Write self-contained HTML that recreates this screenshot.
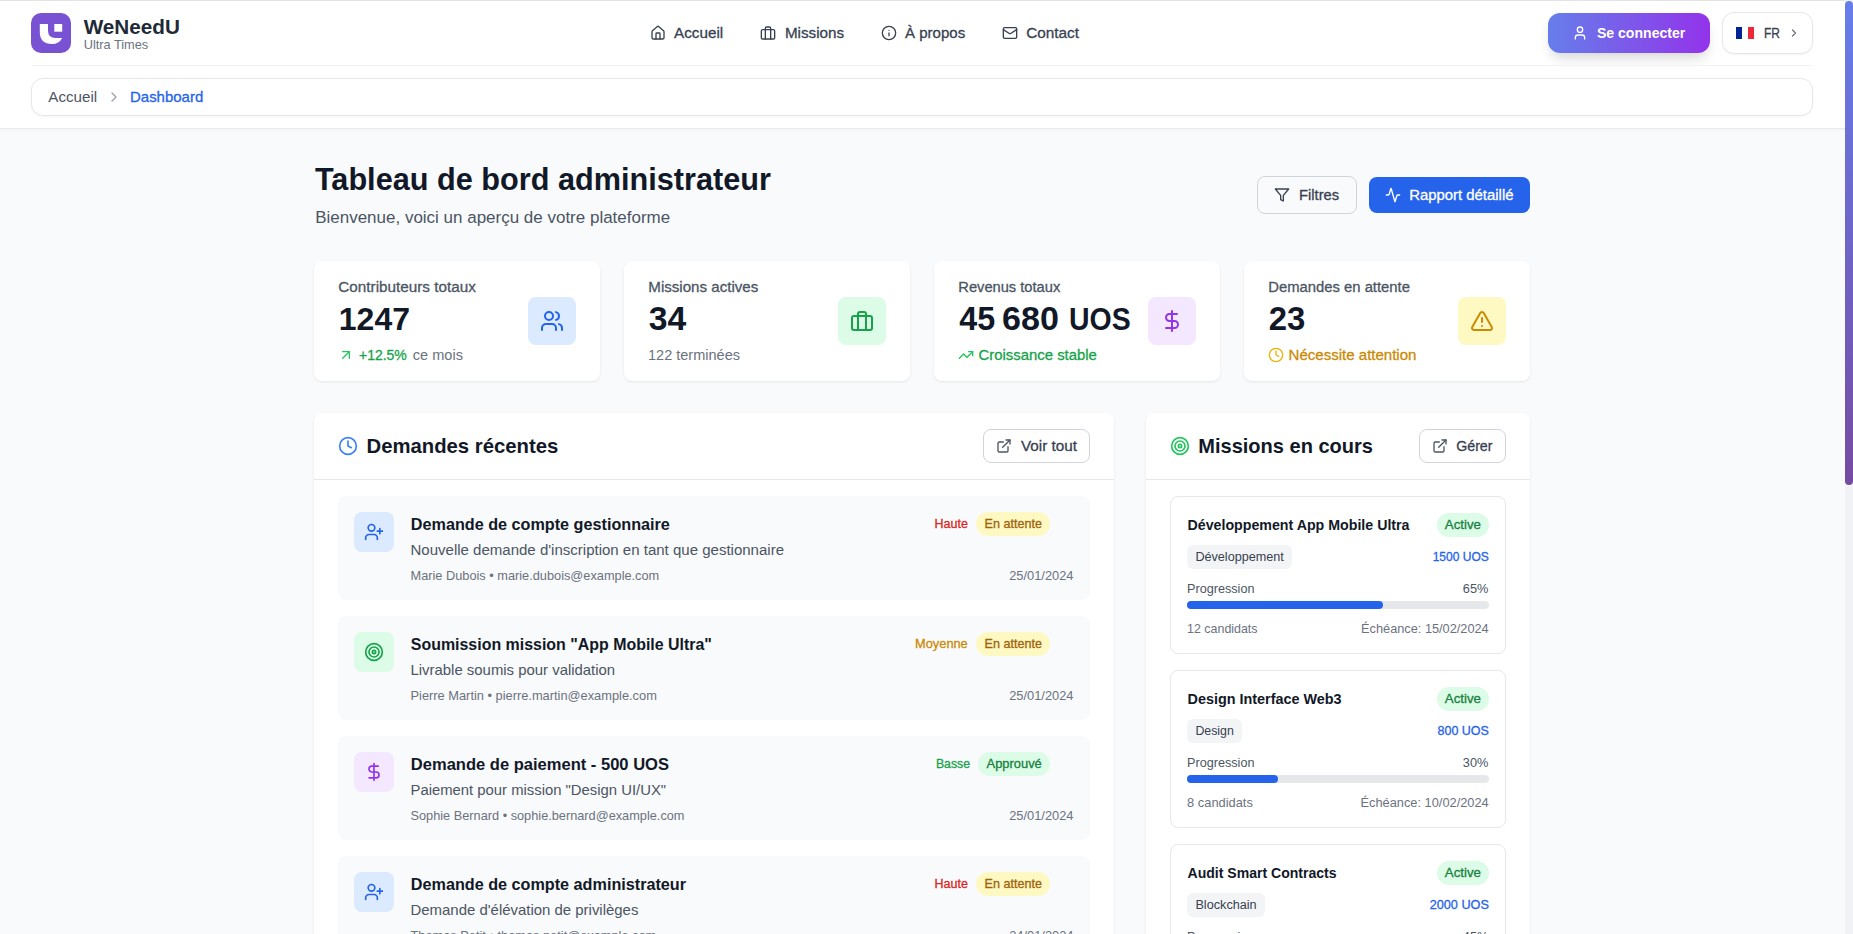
<!DOCTYPE html>
<html lang="fr"><head><meta charset="utf-8"><title>Dashboard</title>
<style>
html,body{margin:0;padding:0;}
body{width:1853px;height:934px;overflow:hidden;position:relative;background:#f9fafb;font-family:"Liberation Sans",sans-serif;}
.t{position:absolute;white-space:nowrap;}
.r{position:absolute;}
.i{position:absolute;overflow:visible;}
</style></head><body>
<div class="r" style="left:0px;top:0px;width:1845px;height:128px;background:#fff;"></div>
<div class="r" style="left:0px;top:0px;width:1845px;height:1px;background:#e3e3e8;"></div>
<div class="r" style="left:0px;top:128px;width:1845px;height:1px;background:#e9ebef;"></div>
<div class="r" style="left:0px;top:129px;width:1845px;height:2px;background:linear-gradient(#eff1f4,#f9fafb);"></div>
<svg class="i" style="left:31px;top:13px" width="40" height="40" viewBox="0 0 40 40"><rect width="40" height="40" rx="10" fill="#7952d3"/><path fill="#fff" d="M8.8 11H17V17.5Q17 25 24.5 25H31.2Q28 31 21 31Q8.8 31 8.8 19Z"/><rect x="23.3" y="11" width="7.9" height="7.7" fill="#fff"/></svg>
<div class="t" style="left:83.70px;top:15.00px;font-size:20.69px;line-height:23px;font-weight:700;color:#1f2937;">WeNeedU</div>
<div class="t" style="left:83.70px;top:37.00px;font-size:12.78px;line-height:15px;color:#6b7280;">Ultra Times</div>
<svg class="i" style="left:650px;top:25px" width="16" height="16" viewBox="0 0 24 24" fill="none" stroke="#374151" stroke-width="2" stroke-linecap="round" stroke-linejoin="round"><path d="M15 21v-8a1 1 0 0 0-1-1h-4a1 1 0 0 0-1 1v8"/><path d="M3 10a2 2 0 0 1 .709-1.528l7-5.999a2 2 0 0 1 2.582 0l7 5.999A2 2 0 0 1 21 10v9a2 2 0 0 1-2 2H5a2 2 0 0 1-2-2z"/></svg>
<div class="t" style="left:674.10px;top:24.00px;font-size:15.22px;line-height:17px;color:#374151;-webkit-text-stroke:0.3px #374151;">Accueil</div>
<svg class="i" style="left:760px;top:25px" width="16" height="16" viewBox="0 0 24 24" fill="none" stroke="#374151" stroke-width="2" stroke-linecap="round" stroke-linejoin="round"><rect width="20" height="14" x="2" y="7" rx="2" ry="2"/><path d="M16 21V5a2 2 0 0 0-2-2h-4a2 2 0 0 0-2 2v16"/></svg>
<div class="t" style="left:784.90px;top:24.00px;font-size:15.22px;line-height:17px;color:#374151;-webkit-text-stroke:0.3px #374151;">Missions</div>
<svg class="i" style="left:881px;top:25px" width="16" height="16" viewBox="0 0 24 24" fill="none" stroke="#374151" stroke-width="2" stroke-linecap="round" stroke-linejoin="round"><circle cx="12" cy="12" r="10"/><path d="M12 16v-4"/><path d="M12 8h.01"/></svg>
<div class="t" style="left:905.00px;top:24.00px;font-size:15.06px;line-height:17px;color:#374151;-webkit-text-stroke:0.3px #374151;">À propos</div>
<svg class="i" style="left:1002px;top:25px" width="16" height="16" viewBox="0 0 24 24" fill="none" stroke="#374151" stroke-width="2" stroke-linecap="round" stroke-linejoin="round"><rect width="20" height="16" x="2" y="4" rx="2"/><path d="m22 7-8.97 5.7a1.94 1.94 0 0 1-2.06 0L2 7"/></svg>
<div class="t" style="left:1026.20px;top:24.00px;font-size:15.33px;line-height:17px;color:#374151;-webkit-text-stroke:0.3px #374151;">Contact</div>
<div class="r" style="left:1548px;top:13px;width:162px;height:40px;border-radius:12px;background:linear-gradient(90deg,#667eea,#9333ea);box-shadow:0 8px 14px -4px rgba(0,0,0,.18);"></div>
<svg class="i" style="left:1572px;top:25px" width="16" height="16" viewBox="0 0 24 24" fill="none" stroke="#fff" stroke-width="2" stroke-linecap="round" stroke-linejoin="round"><path d="M19 21v-2a4 4 0 0 0-4-4H9a4 4 0 0 0-4 4v2"/><circle cx="12" cy="7" r="4"/></svg>
<div class="t" style="left:1596.90px;top:25.00px;font-size:14.08px;line-height:16px;font-weight:700;color:#fff;">Se connecter</div>
<div class="r" style="left:1722px;top:12px;width:91px;height:42px;box-sizing:border-box;border:1px solid #e5e7eb;border-radius:12px;background:#fff;box-shadow:0 1px 2px rgba(0,0,0,.05);"></div>
<div class="r" style="left:1736px;top:27px;width:6px;height:12px;background:#002395;"></div>
<div class="r" style="left:1748px;top:27px;width:6px;height:12px;background:#ed2939;"></div>
<div class="t" style="left:1763.70px;top:24.00px;font-size:15.2px;line-height:17px;color:#374151;transform:scaleX(0.79);transform-origin:0 0;-webkit-text-stroke:0.3px #374151;">FR</div>
<svg class="i" style="left:1788px;top:27px" width="12" height="12" viewBox="0 0 24 24" fill="none" stroke="#6b7280" stroke-width="2.5" stroke-linecap="round" stroke-linejoin="round"><path d="m9 18 6-6-6-6"/></svg>
<div class="r" style="left:31px;top:65px;width:1782px;height:1px;background:#f1f2f4;"></div>
<div class="r" style="left:31px;top:78px;width:1782px;height:38px;box-sizing:border-box;border:1px solid #e5e7eb;border-radius:12px;background:#fff;box-shadow:0 1px 2px rgba(0,0,0,.04);"></div>
<div class="t" style="left:48.30px;top:88.00px;font-size:15.16px;line-height:17px;color:#4b5563;">Accueil</div>
<svg class="i" style="left:106px;top:89px" width="16" height="16" viewBox="0 0 24 24" fill="none" stroke="#9ca3af" stroke-width="2" stroke-linecap="round" stroke-linejoin="round"><path d="m9 18 6-6-6-6"/></svg>
<div class="t" style="left:130.00px;top:88.00px;font-size:14.97px;line-height:17px;color:#2563eb;-webkit-text-stroke:0.3px #2563eb;">Dashboard</div>
<div class="t" style="left:314.90px;top:162.00px;font-size:30.66px;line-height:34px;font-weight:700;color:#111827;">Tableau de bord administrateur</div>
<div class="t" style="left:315.20px;top:208.00px;font-size:16.99px;line-height:19px;color:#4b5563;">Bienvenue, voici un aperçu de votre plateforme</div>
<div class="r" style="left:1257px;top:176px;width:100px;height:38px;box-sizing:border-box;border:1px solid #d1d5db;border-radius:8px;background:#f9fafb;"></div>
<svg class="i" style="left:1274px;top:187px" width="16" height="16" viewBox="0 0 24 24" fill="none" stroke="#374151" stroke-width="2" stroke-linecap="round" stroke-linejoin="round"><polygon points="22 3 2 3 10 12.46 10 19 14 21 14 12.46 22 3"/></svg>
<div class="t" style="left:1299.10px;top:187.00px;font-size:14.71px;line-height:16px;color:#374151;-webkit-text-stroke:0.3px #374151;">Filtres</div>
<div class="r" style="left:1369px;top:177px;width:161px;height:36px;border-radius:8px;background:#2563eb;"></div>
<svg class="i" style="left:1385px;top:187px" width="16" height="16" viewBox="0 0 24 24" fill="none" stroke="#fff" stroke-width="2" stroke-linecap="round" stroke-linejoin="round"><path d="M22 12h-2.48a2 2 0 0 0-1.93 1.46l-2.35 8.36a.25.25 0 0 1-.48 0L9.24 2.18a.25.25 0 0 0-.48 0l-2.35 8.36A2 2 0 0 1 4.49 12H2"/></svg>
<div class="t" style="left:1409.20px;top:187.00px;font-size:14.9px;line-height:16px;color:#fff;-webkit-text-stroke:0.3px #fff;">Rapport détaillé</div>
<div class="r" style="left:314px;top:261px;width:286px;height:120px;border-radius:8px;background:#fff;box-shadow:0 1px 3px rgba(0,0,0,.06),0 1px 2px rgba(0,0,0,.03);"></div>
<div class="t" style="left:338.30px;top:278.00px;font-size:15.28px;line-height:17px;color:#4b5563;-webkit-text-stroke:0.3px #4b5563;">Contributeurs totaux</div>
<div class="t" style="left:338.80px;top:301.00px;font-size:32.0px;line-height:36px;font-weight:700;color:#111827;">1247</div>
<div class="r" style="left:528px;top:297px;width:48px;height:48px;border-radius:8px;background:#dbeafe;"></div>
<svg class="i" style="left:540px;top:309px" width="24" height="24" viewBox="0 0 24 24" fill="none" stroke="#2563eb" stroke-width="2" stroke-linecap="round" stroke-linejoin="round"><path d="M16 21v-2a4 4 0 0 0-4-4H6a4 4 0 0 0-4 4v2"/><circle cx="9" cy="7" r="4"/><path d="M22 21v-2a4 4 0 0 0-3-3.87"/><path d="M16 3.13a4 4 0 0 1 0 7.75"/></svg>
<div class="r" style="left:624px;top:261px;width:286px;height:120px;border-radius:8px;background:#fff;box-shadow:0 1px 3px rgba(0,0,0,.06),0 1px 2px rgba(0,0,0,.03);"></div>
<div class="t" style="left:648.30px;top:278.00px;font-size:15.11px;line-height:17px;color:#4b5563;-webkit-text-stroke:0.3px #4b5563;">Missions actives</div>
<div class="t" style="left:648.80px;top:300.00px;font-size:33.69px;line-height:37px;font-weight:700;color:#111827;">34</div>
<div class="r" style="left:838px;top:297px;width:48px;height:48px;border-radius:8px;background:#dcfce7;"></div>
<svg class="i" style="left:850px;top:309px" width="24" height="24" viewBox="0 0 24 24" fill="none" stroke="#16a34a" stroke-width="2" stroke-linecap="round" stroke-linejoin="round"><rect width="20" height="14" x="2" y="7" rx="2" ry="2"/><path d="M16 21V5a2 2 0 0 0-2-2h-4a2 2 0 0 0-2 2v16"/></svg>
<div class="r" style="left:934px;top:261px;width:286px;height:120px;border-radius:8px;background:#fff;box-shadow:0 1px 3px rgba(0,0,0,.06),0 1px 2px rgba(0,0,0,.03);"></div>
<div class="t" style="left:958.30px;top:279.00px;font-size:14.68px;line-height:16px;color:#4b5563;-webkit-text-stroke:0.3px #4b5563;">Revenus totaux</div>
<div class="t" style="left:959.20px;top:301.00px;font-size:32.3px;line-height:36px;font-weight:700;color:#111827;">45</div>
<div class="t" style="left:1001.80px;top:301.00px;font-size:32.3px;line-height:36px;font-weight:700;color:#111827;transform:scaleX(1.0549);transform-origin:0.0px 0;">680</div>
<div class="t" style="left:1068.90px;top:302.00px;font-size:31px;line-height:35px;font-weight:700;color:#111827;transform:scaleX(0.9178);transform-origin:0.0px 0;">UOS</div>
<div class="r" style="left:1148px;top:297px;width:48px;height:48px;border-radius:8px;background:#f3e8ff;"></div>
<svg class="i" style="left:1160px;top:309px" width="24" height="24" viewBox="0 0 24 24" fill="none" stroke="#9333ea" stroke-width="2" stroke-linecap="round" stroke-linejoin="round"><line x1="12" x2="12" y1="2" y2="22"/><path d="M17 5H9.5a3.5 3.5 0 0 0 0 7h5a3.5 3.5 0 0 1 0 7H6"/></svg>
<div class="r" style="left:1244px;top:261px;width:286px;height:120px;border-radius:8px;background:#fff;box-shadow:0 1px 3px rgba(0,0,0,.06),0 1px 2px rgba(0,0,0,.03);"></div>
<div class="t" style="left:1268.30px;top:279.00px;font-size:14.82px;line-height:16px;color:#4b5563;-webkit-text-stroke:0.3px #4b5563;">Demandes en attente</div>
<div class="t" style="left:1268.80px;top:300.00px;font-size:32.88px;line-height:37px;font-weight:700;color:#111827;">23</div>
<div class="r" style="left:1458px;top:297px;width:48px;height:48px;border-radius:8px;background:#fef9c3;"></div>
<svg class="i" style="left:1470px;top:309px" width="24" height="24" viewBox="0 0 24 24" fill="none" stroke="#ca8a04" stroke-width="2" stroke-linecap="round" stroke-linejoin="round"><path d="m21.73 18-8-14a2 2 0 0 0-3.48 0l-8 14A2 2 0 0 0 4 21h16a2 2 0 0 0 1.73-3"/><path d="M12 9v4"/><path d="M12 17h.01"/></svg>
<svg class="i" style="left:338px;top:347px" width="16" height="16" viewBox="0 0 24 24" fill="none" stroke="#22c55e" stroke-width="2" stroke-linecap="round" stroke-linejoin="round"><path d="M7 7h10v10"/><path d="M7 17 17 7"/></svg>
<div class="t" style="left:359.00px;top:347.00px;font-size:13.98px;line-height:16px;color:#16a34a;-webkit-text-stroke:0.3px #16a34a;">+12.5%</div>
<div class="t" style="left:412.80px;top:347.00px;font-size:14.57px;line-height:16px;color:#6b7280;">ce mois</div>
<div class="t" style="left:648.00px;top:347.00px;font-size:14.52px;line-height:16px;color:#6b7280;">122 terminées</div>
<svg class="i" style="left:958px;top:347px" width="16" height="16" viewBox="0 0 24 24" fill="none" stroke="#22c55e" stroke-width="2" stroke-linecap="round" stroke-linejoin="round"><polyline points="22 7 13.5 15.5 8.5 10.5 2 17"/><polyline points="16 7 22 7 22 13"/></svg>
<div class="t" style="left:978.60px;top:347.00px;font-size:14.89px;line-height:16px;color:#16a34a;-webkit-text-stroke:0.3px #16a34a;">Croissance stable</div>
<svg class="i" style="left:1268px;top:347px" width="16" height="16" viewBox="0 0 24 24" fill="none" stroke="#eab308" stroke-width="2" stroke-linecap="round" stroke-linejoin="round"><circle cx="12" cy="12" r="10"/><polyline points="12 6 12 12 16 14"/></svg>
<div class="t" style="left:1288.60px;top:346.00px;font-size:15.04px;line-height:17px;color:#ca8a04;-webkit-text-stroke:0.3px #ca8a04;">Nécessite attention</div>
<div class="r" style="left:314px;top:413px;width:800px;height:600px;border-radius:8px;background:#fff;box-shadow:0 1px 3px rgba(0,0,0,.06),0 1px 2px rgba(0,0,0,.03);"></div>
<div class="r" style="left:314px;top:479px;width:800px;height:1px;background:#e5e7eb;"></div>
<svg class="i" style="left:338px;top:436px" width="20" height="20" viewBox="0 0 24 24" fill="none" stroke="#3b82f6" stroke-width="2" stroke-linecap="round" stroke-linejoin="round"><circle cx="12" cy="12" r="10"/><polyline points="12 6 12 12 16 14"/></svg>
<div class="t" style="left:366.50px;top:435.00px;font-size:20.31px;line-height:22px;font-weight:700;color:#111827;">Demandes récentes</div>
<div class="r" style="left:983px;top:429px;width:107px;height:34px;box-sizing:border-box;border:1px solid #d1d5db;border-radius:8px;background:#fff;"></div>
<svg class="i" style="left:996px;top:438px" width="16" height="16" viewBox="0 0 24 24" fill="none" stroke="#4b5563" stroke-width="2" stroke-linecap="round" stroke-linejoin="round"><path d="M15 3h6v6"/><path d="M10 14 21 3"/><path d="M18 13v6a2 2 0 0 1-2 2H5a2 2 0 0 1-2-2V8a2 2 0 0 1 2-2h6"/></svg>
<div class="t" style="left:1020.90px;top:437.00px;font-size:15.29px;line-height:17px;color:#374151;-webkit-text-stroke:0.3px #374151;">Voir tout</div>
<div class="r" style="left:338px;top:496px;width:752px;height:104px;border-radius:8px;background:#f9fafb;"></div>
<div class="r" style="left:354px;top:512px;width:40px;height:40px;border-radius:8px;background:#dbeafe;"></div>
<svg class="i" style="left:364px;top:522px" width="20" height="20" viewBox="0 0 24 24" fill="none" stroke="#2563eb" stroke-width="2" stroke-linecap="round" stroke-linejoin="round"><path d="M16 21v-2a4 4 0 0 0-4-4H6a4 4 0 0 0-4 4v2"/><circle cx="9" cy="7" r="4"/><line x1="19" x2="19" y1="8" y2="14"/><line x1="22" x2="16" y1="11" y2="11"/></svg>
<div class="t" style="left:410.80px;top:515.00px;font-size:16.2px;line-height:18px;font-weight:700;color:#111827;">Demande de compte gestionnaire</div>
<div class="t" style="left:410.50px;top:541.00px;font-size:15.02px;line-height:17px;color:#4b5563;">Nouvelle demande d&#x27;inscription en tant que gestionnaire</div>
<div class="t" style="left:410.50px;top:568.00px;font-size:12.78px;line-height:15px;color:#6b7280;">Marie Dubois • marie.dubois@example.com</div>
<div class="t" style="left:1009.20px;top:568.00px;font-size:12.85px;line-height:15px;color:#6b7280;">25/01/2024</div>
<div class="t" style="left:934.60px;top:517.00px;font-size:12.51px;line-height:14px;color:#dc2626;-webkit-text-stroke:0.3px #dc2626;">Haute</div>
<div class="r" style="left:976px;top:512px;width:74px;height:24px;border-radius:12px;background:#fef9c3;"></div>
<div class="t" style="left:984.60px;top:517.00px;font-size:12.57px;line-height:14px;color:#a16207;-webkit-text-stroke:0.3px #a16207;">En attente</div>
<div class="r" style="left:338px;top:616px;width:752px;height:104px;border-radius:8px;background:#f9fafb;"></div>
<div class="r" style="left:354px;top:632px;width:40px;height:40px;border-radius:8px;background:#dcfce7;"></div>
<svg class="i" style="left:364px;top:642px" width="20" height="20" viewBox="0 0 24 24" fill="none" stroke="#16a34a" stroke-width="2" stroke-linecap="round" stroke-linejoin="round"><circle cx="12" cy="12" r="10"/><circle cx="12" cy="12" r="6"/><circle cx="12" cy="12" r="2"/></svg>
<div class="t" style="left:410.80px;top:636.00px;font-size:15.95px;line-height:17px;font-weight:700;color:#111827;">Soumission mission &quot;App Mobile Ultra&quot;</div>
<div class="t" style="left:410.50px;top:661.00px;font-size:14.92px;line-height:17px;color:#4b5563;">Livrable soumis pour validation</div>
<div class="t" style="left:410.50px;top:688.00px;font-size:12.83px;line-height:15px;color:#6b7280;">Pierre Martin • pierre.martin@example.com</div>
<div class="t" style="left:1009.20px;top:688.00px;font-size:12.85px;line-height:15px;color:#6b7280;">25/01/2024</div>
<div class="t" style="left:915.10px;top:636.00px;font-size:12.81px;line-height:15px;color:#ca8a04;-webkit-text-stroke:0.3px #ca8a04;">Moyenne</div>
<div class="r" style="left:976px;top:632px;width:74px;height:24px;border-radius:12px;background:#fef9c3;"></div>
<div class="t" style="left:984.60px;top:637.00px;font-size:12.57px;line-height:14px;color:#a16207;-webkit-text-stroke:0.3px #a16207;">En attente</div>
<div class="r" style="left:338px;top:736px;width:752px;height:104px;border-radius:8px;background:#f9fafb;"></div>
<div class="r" style="left:354px;top:752px;width:40px;height:40px;border-radius:8px;background:#f3e8ff;"></div>
<svg class="i" style="left:364px;top:762px" width="20" height="20" viewBox="0 0 24 24" fill="none" stroke="#9333ea" stroke-width="2" stroke-linecap="round" stroke-linejoin="round"><line x1="12" x2="12" y1="2" y2="22"/><path d="M17 5H9.5a3.5 3.5 0 0 0 0 7h5a3.5 3.5 0 0 1 0 7H6"/></svg>
<div class="t" style="left:410.80px;top:755.00px;font-size:16.55px;line-height:19px;font-weight:700;color:#111827;">Demande de paiement - 500 UOS</div>
<div class="t" style="left:410.50px;top:782.00px;font-size:14.85px;line-height:16px;color:#4b5563;">Paiement pour mission &quot;Design UI/UX&quot;</div>
<div class="t" style="left:410.50px;top:808.00px;font-size:12.76px;line-height:15px;color:#6b7280;">Sophie Bernard • sophie.bernard@example.com</div>
<div class="t" style="left:1009.20px;top:808.00px;font-size:12.85px;line-height:15px;color:#6b7280;">25/01/2024</div>
<div class="t" style="left:935.90px;top:757.00px;font-size:12.27px;line-height:14px;color:#16a34a;-webkit-text-stroke:0.3px #16a34a;">Basse</div>
<div class="r" style="left:978px;top:752px;width:72px;height:24px;border-radius:12px;background:#dcfce7;"></div>
<div class="t" style="left:986.60px;top:756.00px;font-size:12.9px;line-height:15px;color:#15803d;-webkit-text-stroke:0.3px #15803d;">Approuvé</div>
<div class="r" style="left:338px;top:856px;width:752px;height:104px;border-radius:8px;background:#f9fafb;"></div>
<div class="r" style="left:354px;top:872px;width:40px;height:40px;border-radius:8px;background:#dbeafe;"></div>
<svg class="i" style="left:364px;top:882px" width="20" height="20" viewBox="0 0 24 24" fill="none" stroke="#2563eb" stroke-width="2" stroke-linecap="round" stroke-linejoin="round"><path d="M16 21v-2a4 4 0 0 0-4-4H6a4 4 0 0 0-4 4v2"/><circle cx="9" cy="7" r="4"/><line x1="19" x2="19" y1="8" y2="14"/><line x1="22" x2="16" y1="11" y2="11"/></svg>
<div class="t" style="left:410.80px;top:875.00px;font-size:16.22px;line-height:18px;font-weight:700;color:#111827;">Demande de compte administrateur</div>
<div class="t" style="left:410.50px;top:901.00px;font-size:14.95px;line-height:17px;color:#4b5563;">Demande d&#x27;élévation de privilèges</div>
<div class="t" style="left:410.50px;top:928.00px;font-size:12.8px;line-height:15px;color:#6b7280;">Thomas Petit • thomas.petit@example.com</div>
<div class="t" style="left:1009.20px;top:928.00px;font-size:12.85px;line-height:15px;color:#6b7280;">24/01/2024</div>
<div class="t" style="left:934.60px;top:877.00px;font-size:12.51px;line-height:14px;color:#dc2626;-webkit-text-stroke:0.3px #dc2626;">Haute</div>
<div class="r" style="left:976px;top:872px;width:74px;height:24px;border-radius:12px;background:#fef9c3;"></div>
<div class="t" style="left:984.60px;top:877.00px;font-size:12.57px;line-height:14px;color:#a16207;-webkit-text-stroke:0.3px #a16207;">En attente</div>
<div class="r" style="left:1146px;top:413px;width:384px;height:600px;border-radius:8px;background:#fff;box-shadow:0 1px 3px rgba(0,0,0,.06),0 1px 2px rgba(0,0,0,.03);"></div>
<div class="r" style="left:1146px;top:479px;width:384px;height:1px;background:#e5e7eb;"></div>
<svg class="i" style="left:1170px;top:436px" width="20" height="20" viewBox="0 0 24 24" fill="none" stroke="#22c55e" stroke-width="2" stroke-linecap="round" stroke-linejoin="round"><circle cx="12" cy="12" r="10"/><circle cx="12" cy="12" r="6"/><circle cx="12" cy="12" r="2"/></svg>
<div class="t" style="left:1198.30px;top:435.00px;font-size:20.03px;line-height:22px;font-weight:700;color:#111827;">Missions en cours</div>
<div class="r" style="left:1419px;top:429px;width:87px;height:34px;box-sizing:border-box;border:1px solid #d1d5db;border-radius:8px;background:#fff;"></div>
<svg class="i" style="left:1432px;top:438px" width="16" height="16" viewBox="0 0 24 24" fill="none" stroke="#4b5563" stroke-width="2" stroke-linecap="round" stroke-linejoin="round"><path d="M15 3h6v6"/><path d="M10 14 21 3"/><path d="M18 13v6a2 2 0 0 1-2 2H5a2 2 0 0 1-2-2V8a2 2 0 0 1 2-2h6"/></svg>
<div class="t" style="left:1456.20px;top:438.00px;font-size:14.21px;line-height:16px;color:#374151;-webkit-text-stroke:0.3px #374151;">Gérer</div>
<div class="r" style="left:1170px;top:496px;width:336px;height:158px;box-sizing:border-box;border:1px solid #e5e7eb;border-radius:8px;background:#fff;"></div>
<div class="t" style="left:1187.50px;top:517.00px;font-size:14.21px;line-height:16px;font-weight:700;color:#111827;">Développement App Mobile Ultra</div>
<div class="r" style="left:1437px;top:513px;width:52px;height:24px;border-radius:12px;background:#dcfce7;"></div>
<div class="t" style="left:1444.80px;top:517.00px;font-size:13.28px;line-height:15px;color:#15803d;-webkit-text-stroke:0.3px #15803d;">Active</div>
<div class="r" style="left:1187px;top:545px;width:105px;height:24px;border-radius:6px;background:#f3f4f6;"></div>
<div class="t" style="left:1195.40px;top:550.00px;font-size:12.63px;line-height:14px;color:#374151;">Développement</div>
<div class="t" style="left:1432.70px;top:550.00px;font-size:12.03px;line-height:14px;color:#2563eb;-webkit-text-stroke:0.3px #2563eb;">1500 UOS</div>
<div class="t" style="left:1187.10px;top:582.00px;font-size:12.63px;line-height:14px;color:#4b5563;">Progression</div>
<div class="t" style="left:1462.80px;top:581.00px;font-size:12.75px;line-height:15px;color:#4b5563;">65%</div>
<div class="r" style="left:1187px;top:601px;width:302px;height:8px;border-radius:4px;background:#e5e7eb;"></div>
<div class="r" style="left:1187px;top:601px;width:196px;height:8px;border-radius:4px;background:#2563eb;"></div>
<div class="t" style="left:1187.10px;top:622.00px;font-size:12.43px;line-height:14px;color:#6b7280;">12 candidats</div>
<div class="t" style="left:1361.10px;top:621.00px;font-size:12.76px;line-height:15px;color:#6b7280;">Échéance: 15/02/2024</div>
<div class="r" style="left:1170px;top:670px;width:336px;height:158px;box-sizing:border-box;border:1px solid #e5e7eb;border-radius:8px;background:#fff;"></div>
<div class="t" style="left:1187.50px;top:691.00px;font-size:14.4px;line-height:16px;font-weight:700;color:#111827;">Design Interface Web3</div>
<div class="r" style="left:1437px;top:687px;width:52px;height:24px;border-radius:12px;background:#dcfce7;"></div>
<div class="t" style="left:1444.80px;top:691.00px;font-size:13.28px;line-height:15px;color:#15803d;-webkit-text-stroke:0.3px #15803d;">Active</div>
<div class="r" style="left:1187px;top:719px;width:55px;height:24px;border-radius:6px;background:#f3f4f6;"></div>
<div class="t" style="left:1195.40px;top:724.00px;font-size:12.36px;line-height:14px;color:#374151;">Design</div>
<div class="t" style="left:1437.50px;top:724.00px;font-size:12.49px;line-height:14px;color:#2563eb;-webkit-text-stroke:0.3px #2563eb;">800 UOS</div>
<div class="t" style="left:1187.10px;top:756.00px;font-size:12.63px;line-height:14px;color:#4b5563;">Progression</div>
<div class="t" style="left:1462.80px;top:755.00px;font-size:12.75px;line-height:15px;color:#4b5563;">30%</div>
<div class="r" style="left:1187px;top:775px;width:302px;height:8px;border-radius:4px;background:#e5e7eb;"></div>
<div class="r" style="left:1187px;top:775px;width:91px;height:8px;border-radius:4px;background:#2563eb;"></div>
<div class="t" style="left:1187.10px;top:795.00px;font-size:12.86px;line-height:15px;color:#6b7280;">8 candidats</div>
<div class="t" style="left:1360.50px;top:795.00px;font-size:12.82px;line-height:15px;color:#6b7280;">Échéance: 10/02/2024</div>
<div class="r" style="left:1170px;top:844px;width:336px;height:158px;box-sizing:border-box;border:1px solid #e5e7eb;border-radius:8px;background:#fff;"></div>
<div class="t" style="left:1187.50px;top:865.00px;font-size:14.05px;line-height:16px;font-weight:700;color:#111827;">Audit Smart Contracts</div>
<div class="r" style="left:1437px;top:861px;width:52px;height:24px;border-radius:12px;background:#dcfce7;"></div>
<div class="t" style="left:1444.80px;top:865.00px;font-size:13.28px;line-height:15px;color:#15803d;-webkit-text-stroke:0.3px #15803d;">Active</div>
<div class="r" style="left:1187px;top:893px;width:78px;height:24px;border-radius:6px;background:#f3f4f6;"></div>
<div class="t" style="left:1195.40px;top:898.00px;font-size:12.68px;line-height:14px;color:#374151;">Blockchain</div>
<div class="t" style="left:1429.70px;top:898.00px;font-size:12.68px;line-height:14px;color:#2563eb;-webkit-text-stroke:0.3px #2563eb;">2000 UOS</div>
<div class="t" style="left:1187.10px;top:930.00px;font-size:12.63px;line-height:14px;color:#4b5563;">Progression</div>
<div class="t" style="left:1462.80px;top:929.00px;font-size:12.75px;line-height:15px;color:#4b5563;">45%</div>
<div class="r" style="left:1187px;top:949px;width:302px;height:8px;border-radius:4px;background:#e5e7eb;"></div>
<div class="r" style="left:1187px;top:949px;width:136px;height:8px;border-radius:4px;background:#2563eb;"></div>
<div class="t" style="left:1187.10px;top:969.00px;font-size:12.86px;line-height:15px;color:#6b7280;">5 candidats</div>
<div class="t" style="left:1360.50px;top:969.00px;font-size:12.82px;line-height:15px;color:#6b7280;">Échéance: 20/02/2024</div>
<div class="r" style="left:1845px;top:0px;width:8px;height:934px;background:#f0f2f6;"></div>
<div class="r" style="left:1845px;top:1px;width:8px;height:484px;border-radius:4px;background:linear-gradient(180deg,#667eea,#764ba2);"></div>
</body></html>
